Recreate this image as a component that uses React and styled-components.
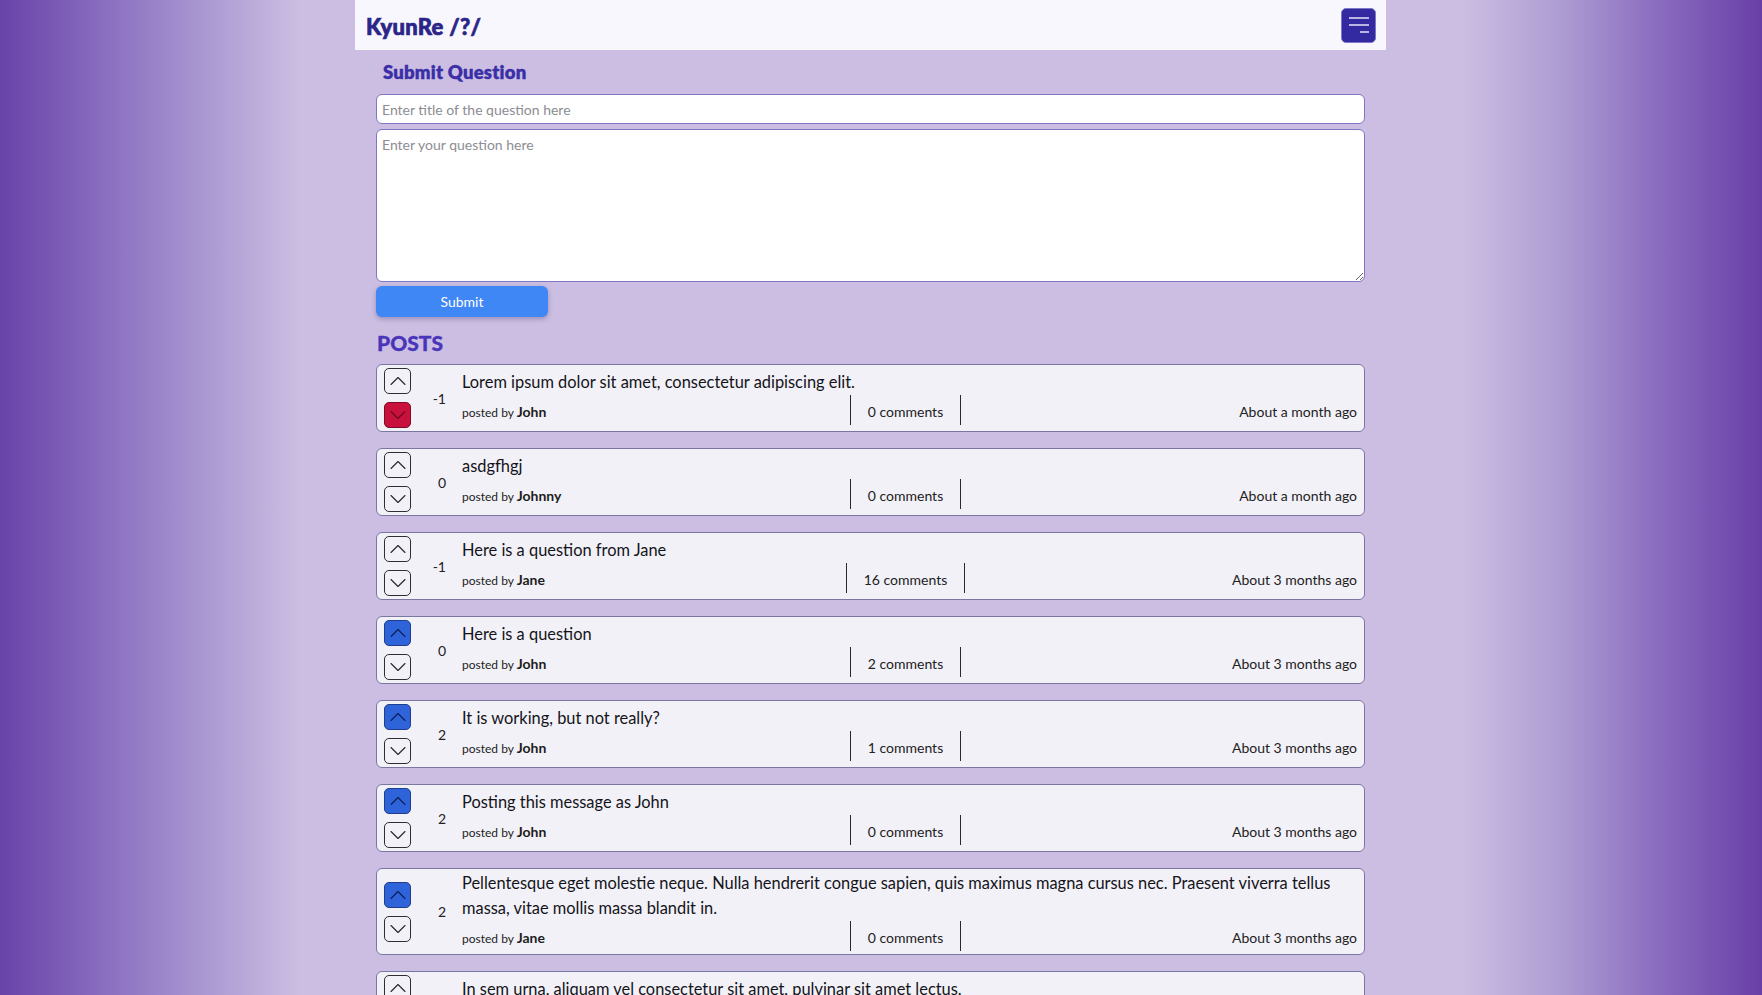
import React from "react";
import styled, { createGlobalStyle, css } from "styled-components";

const GlobalStyle = createGlobalStyle`
  html, body {
    margin: 0;
    padding: 0;
  }
  body {
    font-family: Lato, "Noto Sans", sans-serif;
    color: #1b1b1f;
    min-height: 100vh;
    background: linear-gradient(
      90deg,
      #6843a9 0%,
      #8a6ec0 6%,
      #ac9bd3 12%,
      #cbbee2 17%,
      #cbbee2 83%,
      #ae9dd3 88.5%,
      #8b6dc0 94%,
      #683fa7 100%
    );
    background-attachment: fixed;
  }
`;

const posts = [
  { id: 1, title: "Lorem ipsum dolor sit amet, consectetur adipiscing elit.", score: -1, vote: "down", author: "John", comments: 0, time: "About a month ago" },
  { id: 2, title: "asdgfhgj", score: 0, vote: null, author: "Johnny", comments: 0, time: "About a month ago" },
  { id: 3, title: "Here is a question from Jane", score: -1, vote: null, author: "Jane", comments: 16, time: "About 3 months ago" },
  { id: 4, title: "Here is a question", score: 0, vote: "up", author: "John", comments: 2, time: "About 3 months ago" },
  { id: 5, title: "It is working, but not really?", score: 2, vote: "up", author: "John", comments: 1, time: "About 3 months ago" },
  { id: 6, title: "Posting this message as John", score: 2, vote: "up", author: "John", comments: 0, time: "About 3 months ago" },
  {
    id: 7,
    title:
      "Pellentesque eget molestie neque. Nulla hendrerit congue sapien, quis maximus magna cursus nec. Praesent viverra tellus massa, vitae mollis massa blandit in.",
    score: 2,
    vote: "up",
    author: "Jane",
    comments: 0,
    time: "About 3 months ago",
  },
  { id: 8, title: "In sem urna, aliquam vel consectetur sit amet, pulvinar sit amet lectus.", score: 0, vote: null, author: "John", comments: 0, time: "About 3 months ago" },
];

const Page = styled.div`
  padding-right: 21px;
`;

const Column = styled.div`
  width: 1031px;
  margin: 0 auto;
`;

const Header = styled.header`
  height: 50px;
  background: #f8f7fd;
  display: flex;
  align-items: center;
  justify-content: space-between;
  padding: 0 10px 0 11px;
  box-sizing: border-box;
`;

const Logo = styled.div`
  font-size: 22px;
  font-weight: 900;
  color: #2c2589;
  letter-spacing: 0.3px;
  margin-top: 2px;
  -webkit-text-stroke: 0.7px #2c2589;
`;

const MenuButton = styled.button`
  width: 35px;
  height: 35px;
  background: #3329a0;
  border: 1px solid #7d77c6;
  border-radius: 5px;
  display: flex;
  align-items: center;
  justify-content: center;
  padding: 0;
  cursor: pointer;
`;

const Main = styled.main`
  padding: 0 21px;
`;

const SectionTitle = styled.h2`
  margin: 11px 0 11px 7px;
  font-size: 18.5px;
  line-height: 22px;
  font-weight: 800;
  color: #3a2fa6;
  letter-spacing: 0.2px;
  -webkit-text-stroke: 0.3px #3a2fa6;
`;

const fieldBase = css`
  display: block;
  width: 100%;
  box-sizing: border-box;
  border: 1px solid #7f77c4;
  border-radius: 6px;
  background: #ffffff;
  font-family: Lato, "Noto Sans", sans-serif;
  font-size: 14px;
  color: #222;
  padding: 0 5px;
  outline: none;
  &::placeholder {
    color: #8d8d93;
  }
`;

const TitleInput = styled.input`
  ${fieldBase};
  height: 30px;
`;

const QuestionArea = styled.textarea`
  ${fieldBase};
  height: 153px;
  margin-top: 5px;
  padding-top: 6px;
  resize: vertical;
`;

const SubmitButton = styled.button`
  margin-top: 4px;
  width: 172px;
  height: 31px;
  border: none;
  border-radius: 6px;
  background: #3f87f5;
  color: #ffffff;
  font-family: Lato, "Noto Sans", sans-serif;
  font-size: 14px;
  box-shadow: 0 2px 5px rgba(40, 30, 90, 0.3);
  cursor: pointer;
`;

const PostsTitle = styled.h2`
  margin: 13px 0 8px 1px;
  font-size: 21px;
  line-height: 26px;
  font-weight: 900;
  color: #4935ba;
  -webkit-text-stroke: 0.3px #4935ba;
`;

const PostList = styled.div`
  display: flex;
  flex-direction: column;
  gap: 16px;
  padding-bottom: 30px;
`;

const Card = styled.article`
  display: flex;
  align-items: center;
  background: #f2f1f8;
  border: 1px solid #7c76a3;
  border-radius: 6px;
  padding: 3px 7px 3px 7px;
`;

const VoteColumn = styled.div`
  display: flex;
  flex-direction: column;
  gap: 8px;
`;

const voteColors = {
  up: { bg: "#2f63da", border: "#1f3f8c", stroke: "#0d1f52" },
  down: { bg: "#c8113d", border: "#7d0c26", stroke: "#6c0a1f" },
};

const VoteButton = styled.button`
  width: 27px;
  height: 26px;
  padding: 0;
  border-radius: 5px;
  display: flex;
  align-items: center;
  justify-content: center;
  border: 1px solid ${(p) => (p.$active ? voteColors[p.$active].border : "#2e2e33")};
  background: ${(p) => (p.$active ? voteColors[p.$active].bg : "transparent")};
  color: ${(p) => (p.$active ? voteColors[p.$active].stroke : "#26262b")};
  cursor: pointer;
`;

const Score = styled.div`
  width: 35px;
  text-align: right;
  font-size: 14px;
  color: #222;
  flex-shrink: 0;
`;

const Body = styled.div`
  flex: 1;
  margin-left: 16px;
  display: flex;
  flex-direction: column;
`;

const PostTitle = styled.div`
  font-size: 16.4px;
  line-height: 24.6px;
  color: #141418;
  margin-top: -1px;
`;

const Footer = styled.div`
  margin-top: 1px;
  height: 30px;
  display: grid;
  grid-template-columns: 1fr auto 1fr;
  align-items: center;
`;

const Author = styled.div`
  font-size: 12px;
  color: #1d1d21;
  padding-top: 3px;
  b {
    font-size: 14px;
    font-weight: 700;
  }
`;

const Comments = styled.div`
  height: 30px;
  box-sizing: border-box;
  display: flex;
  align-items: center;
  padding: 3px 17px 0;
  border-left: 1px solid #2a2a2e;
  border-right: 1px solid #2a2a2e;
  font-size: 14px;
  color: #222;
  margin-right: 8px;
`;

const Time = styled.div`
  text-align: right;
  font-size: 14px;
  color: #222;
  padding-top: 3px;
`;

const Chevron = ({ dir }) => (
  <svg width="16" height="10" viewBox="0 0 16 10" fill="none">
    <polyline
      points={dir === "up" ? "1,8.5 8,1.5 15,8.5" : "1,1.5 8,8.5 15,1.5"}
      stroke="currentColor"
      strokeWidth="1.1"
      strokeLinecap="round"
      strokeLinejoin="round"
    />
  </svg>
);

const MenuIcon = () => (
  <svg width="22" height="18" viewBox="0 0 22 18" fill="none">
    <line x1="1" y1="2" x2="21" y2="2" stroke="#dcd8f2" strokeWidth="1.6" />
    <line x1="1" y1="9" x2="21" y2="9" stroke="#dcd8f2" strokeWidth="1.6" />
    <line x1="12" y1="16" x2="21" y2="16" stroke="#dcd8f2" strokeWidth="1.6" />
  </svg>
);

function PostCard({ post }) {
  return (
    <Card>
      <VoteColumn>
        <VoteButton $active={post.vote === "up" ? "up" : null} aria-label="upvote">
          <Chevron dir="up" />
        </VoteButton>
        <VoteButton $active={post.vote === "down" ? "down" : null} aria-label="downvote">
          <Chevron dir="down" />
        </VoteButton>
      </VoteColumn>
      <Score>{post.score}</Score>
      <Body>
        <PostTitle>{post.title}</PostTitle>
        <Footer>
          <Author>
            posted by <b>{post.author}</b>
          </Author>
          <Comments>{post.comments} comments</Comments>
          <Time>{post.time}</Time>
        </Footer>
      </Body>
    </Card>
  );
}

export default function App() {
  return (
    <>
      <GlobalStyle />
      <Page>
        <Column>
          <Header>
            <Logo>KyunRe /?/</Logo>
            <MenuButton aria-label="menu">
              <MenuIcon />
            </MenuButton>
          </Header>
          <Main>
            <SectionTitle>Submit Question</SectionTitle>
            <TitleInput placeholder="Enter title of the question here" />
            <QuestionArea placeholder="Enter your question here" />
            <SubmitButton>Submit</SubmitButton>
            <PostsTitle>POSTS</PostsTitle>
            <PostList>
              {posts.map((post) => (
                <PostCard key={post.id} post={post} />
              ))}
            </PostList>
          </Main>
        </Column>
      </Page>
    </>
  );
}
